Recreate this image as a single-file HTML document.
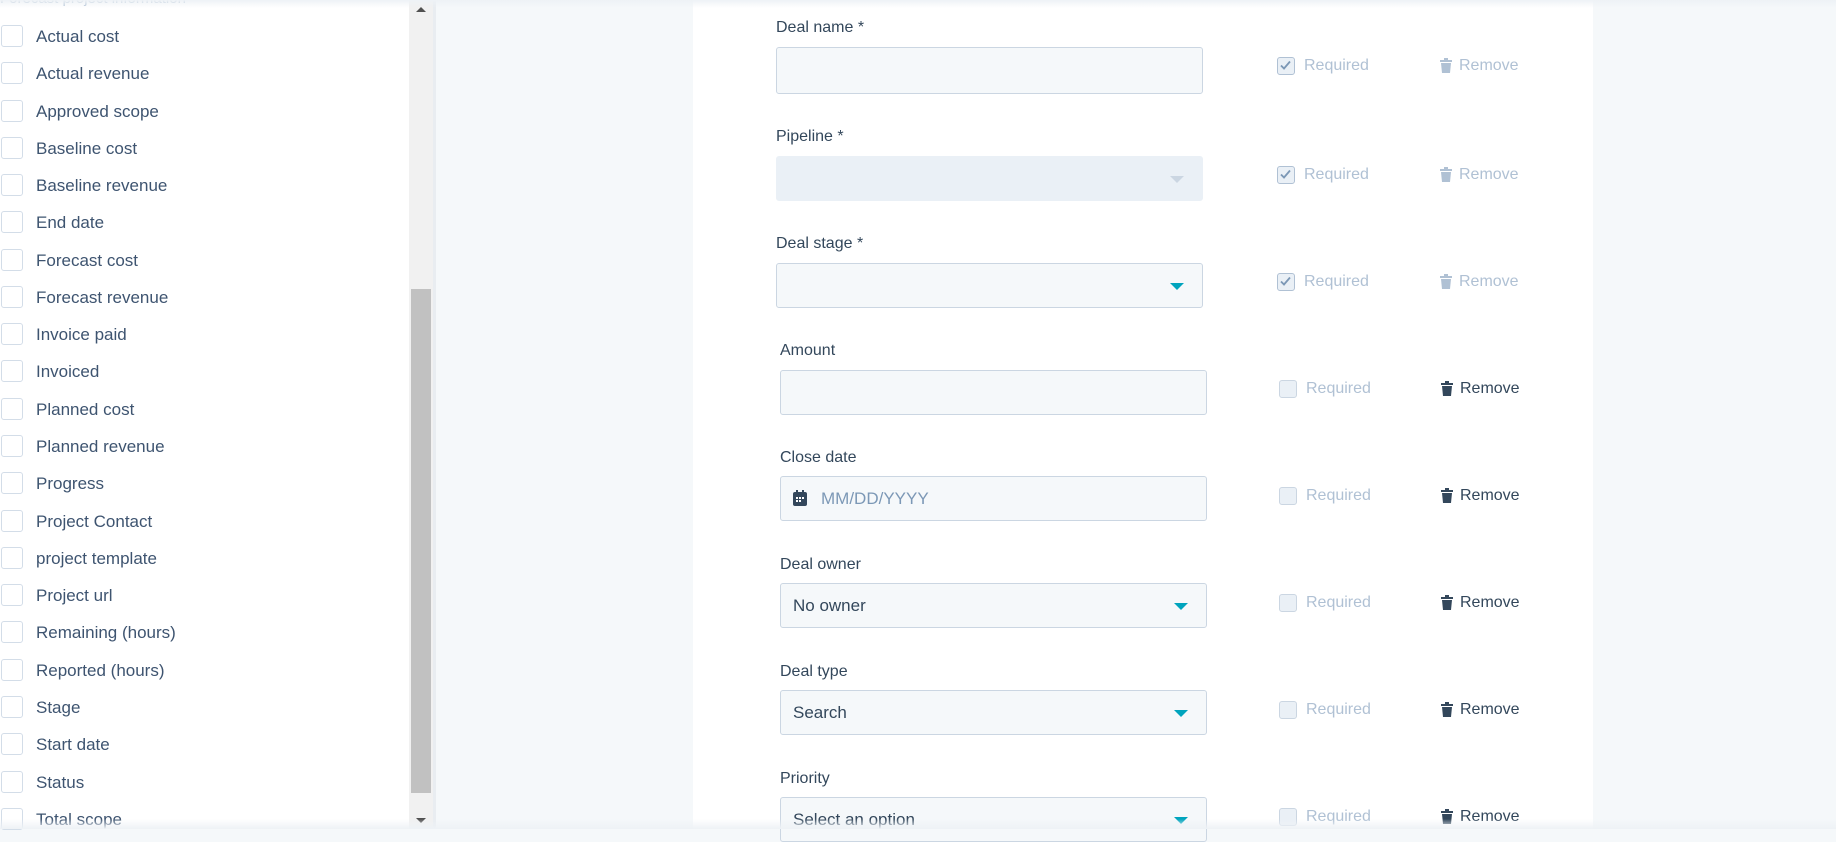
<!DOCTYPE html>
<html><head><meta charset="utf-8"><style>
*{box-sizing:border-box;margin:0;padding:0}
body{width:1836px;height:829px;overflow:hidden;background:#f5f8fa;font-family:"Liberation Sans",sans-serif;position:relative;color:#33475b}
.left{position:absolute;left:0;top:0;width:409px;height:829px;background:#fff}
.item{position:absolute;left:0;height:24px;font-size:17px;line-height:24px;color:#3e5470}
.item .cb{position:absolute;left:1px;top:0px;width:22px;height:22px;border:1.5px solid #d3dde8;border-radius:3px;background:#fff}
.item span{position:absolute;left:36px;top:0;white-space:nowrap}
.track{position:absolute;left:409px;top:0;width:24px;height:829px;background:#f1f1f1}
.thumb{position:absolute;left:411px;top:289px;width:20px;height:504px;background:#c1c1c1}
.border{position:absolute;left:433px;top:0;width:3px;height:829px;background:#e9edf1}
.card{position:absolute;left:693px;top:0;width:900px;height:829px;background:#fff}
.lbl{position:absolute;font-size:16px;color:#33475b;white-space:nowrap}
.inp{position:absolute;width:427px;background:#f5f8fa;border:1px solid #cbd6e2;border-radius:3px;font-size:17px;color:#33475b}
.inp .t{position:absolute;left:12px;top:50%;transform:translateY(-50%);white-space:nowrap}
.arr{position:absolute;right:18px;top:50%;margin-top:-3px;width:0;height:0;border-left:7px solid transparent;border-right:7px solid transparent;border-top:7px solid #00a4bd}
.req{position:absolute;left:1279px;font-size:16px;color:#b0c1d4;height:20px}
.req .b{position:absolute;left:0;top:0;width:18px;height:18px;border:1.5px solid #cbd6e2;border-radius:3px;background:#eaf0f6}
.req .b.on{border-color:#b0c1d4;background:#eaf0f6}
.req span{position:absolute;left:27px;top:0;line-height:18px}
.rem{position:absolute;left:1441px;font-size:16px;height:20px;line-height:18px;white-space:nowrap}
.rem svg{position:absolute;left:0;top:1px}
.rem span{position:absolute;left:19px;top:0}
.topsh{position:absolute;left:0;top:0;width:1836px;height:8px;background:linear-gradient(#eef2f6,rgba(255,255,255,0))}
.botsh{position:absolute;left:0;top:819px;width:1836px;height:10px;background:linear-gradient(rgba(245,248,250,0),#eef2f6)}
</style></head><body>
<div class="left">
<div style="position:absolute;left:0;top:-10px;font-size:15px;color:#b0c1d4">Forecast project information</div>
<div class="item" style="top:25px"><div class="cb"></div><span>Actual cost</span></div>
<div class="item" style="top:62px"><div class="cb"></div><span>Actual revenue</span></div>
<div class="item" style="top:100px"><div class="cb"></div><span>Approved scope</span></div>
<div class="item" style="top:137px"><div class="cb"></div><span>Baseline cost</span></div>
<div class="item" style="top:174px"><div class="cb"></div><span>Baseline revenue</span></div>
<div class="item" style="top:211px"><div class="cb"></div><span>End date</span></div>
<div class="item" style="top:249px"><div class="cb"></div><span>Forecast cost</span></div>
<div class="item" style="top:286px"><div class="cb"></div><span>Forecast revenue</span></div>
<div class="item" style="top:323px"><div class="cb"></div><span>Invoice paid</span></div>
<div class="item" style="top:360px"><div class="cb"></div><span>Invoiced</span></div>
<div class="item" style="top:398px"><div class="cb"></div><span>Planned cost</span></div>
<div class="item" style="top:435px"><div class="cb"></div><span>Planned revenue</span></div>
<div class="item" style="top:472px"><div class="cb"></div><span>Progress</span></div>
<div class="item" style="top:510px"><div class="cb"></div><span>Project Contact</span></div>
<div class="item" style="top:547px"><div class="cb"></div><span>project template</span></div>
<div class="item" style="top:584px"><div class="cb"></div><span>Project url</span></div>
<div class="item" style="top:621px"><div class="cb"></div><span>Remaining (hours)</span></div>
<div class="item" style="top:659px"><div class="cb"></div><span>Reported (hours)</span></div>
<div class="item" style="top:696px"><div class="cb"></div><span>Stage</span></div>
<div class="item" style="top:733px"><div class="cb"></div><span>Start date</span></div>
<div class="item" style="top:771px"><div class="cb"></div><span>Status</span></div>
<div class="item" style="top:808px"><div class="cb"></div><span>Total scope</span></div>
</div>
<div class="track"></div>
<div class="thumb"></div>
<div style="position:absolute;left:416px;top:7px;border-left:5px solid transparent;border-right:5px solid transparent;border-bottom:5px solid #505050"></div>
<div style="position:absolute;left:416px;top:818px;border-left:5px solid transparent;border-right:5px solid transparent;border-top:5px solid #505050"></div>
<div class="border"></div>
<div class="card"></div>

<div class="lbl" style="left:776px;top:19px">Deal name *</div>
<div class="inp" style="left:776px;top:47px;height:47px"></div>
<div class="lbl" style="left:776px;top:128px">Pipeline *</div>
<div class="inp" style="left:776px;top:156px;height:45px;background:#eaf0f6;border-color:#eaf0f6"><div class="arr" style="border-top-color:#cbd6e2"></div></div>
<div class="lbl" style="left:776px;top:235px">Deal stage *</div>
<div class="inp" style="left:776px;top:263px;height:45px"><div class="arr"></div></div>
<div class="lbl" style="left:780px;top:342px">Amount</div>
<div class="inp" style="left:780px;top:370px;height:45px"></div>
<div class="lbl" style="left:780px;top:449px">Close date</div>
<div class="inp" style="left:780px;top:476px;height:45px"><svg style="position:absolute;left:12px;top:13px" width="14" height="16" viewBox="0 0 14 16"><rect x="0" y="2" width="14" height="14" rx="2" fill="#33475b"/><rect x="3" y="0" width="2" height="4" fill="#33475b"/><rect x="9" y="0" width="2" height="4" fill="#33475b"/><g fill="#fff"><rect x="3" y="7" width="2" height="2"/><rect x="6" y="7" width="2" height="2"/><rect x="9" y="7" width="2" height="2"/><rect x="3" y="10" width="2" height="2"/><rect x="6" y="10" width="2" height="2"/></g></svg><span class="t" style="left:40px;color:#7c98b6">MM/DD/YYYY</span></div>
<div class="lbl" style="left:780px;top:556px">Deal owner</div>
<div class="inp" style="left:780px;top:583px;height:45px"><span class="t">No owner</span><div class="arr"></div></div>
<div class="lbl" style="left:780px;top:663px">Deal type</div>
<div class="inp" style="left:780px;top:690px;height:45px"><span class="t">Search</span><div class="arr"></div></div>
<div class="lbl" style="left:780px;top:770px">Priority</div>
<div class="inp" style="left:780px;top:797px;height:45px"><span class="t">Select an option</span><div class="arr"></div></div>

<div class="req" style="top:57px;left:1277px"><div class="b on"><svg width="15" height="15" viewBox="0 0 15 15" style="position:absolute;left:0;top:0"><path d="M3 7.5l3 3 6-7" stroke="#7c98b6" stroke-width="1.8" fill="none"/></svg></div><span>Required</span></div>
<div class="rem" style="top:57px;color:#b0c1d4;left:1440px"><svg width="12" height="15" viewBox="0 0 12 15"><rect x="4" y="0" width="4" height="2" fill="#b0c1d4"/><rect x="0" y="2" width="12" height="2" fill="#b0c1d4"/><path d="M1 5h10l-1 10H2z" fill="#b0c1d4"/></svg><span>Remove</span></div>
<div class="req" style="top:166px;left:1277px"><div class="b on"><svg width="15" height="15" viewBox="0 0 15 15" style="position:absolute;left:0;top:0"><path d="M3 7.5l3 3 6-7" stroke="#7c98b6" stroke-width="1.8" fill="none"/></svg></div><span>Required</span></div>
<div class="rem" style="top:166px;color:#b0c1d4;left:1440px"><svg width="12" height="15" viewBox="0 0 12 15"><rect x="4" y="0" width="4" height="2" fill="#b0c1d4"/><rect x="0" y="2" width="12" height="2" fill="#b0c1d4"/><path d="M1 5h10l-1 10H2z" fill="#b0c1d4"/></svg><span>Remove</span></div>
<div class="req" style="top:273px;left:1277px"><div class="b on"><svg width="15" height="15" viewBox="0 0 15 15" style="position:absolute;left:0;top:0"><path d="M3 7.5l3 3 6-7" stroke="#7c98b6" stroke-width="1.8" fill="none"/></svg></div><span>Required</span></div>
<div class="rem" style="top:273px;color:#b0c1d4;left:1440px"><svg width="12" height="15" viewBox="0 0 12 15"><rect x="4" y="0" width="4" height="2" fill="#b0c1d4"/><rect x="0" y="2" width="12" height="2" fill="#b0c1d4"/><path d="M1 5h10l-1 10H2z" fill="#b0c1d4"/></svg><span>Remove</span></div>

<div class="req" style="top:380px"><div class="b"></div><span>Required</span></div>
<div class="rem" style="top:380px;color:#33475b"><svg width="12" height="15" viewBox="0 0 12 15"><rect x="4" y="0" width="4" height="2" fill="#33475b"/><rect x="0" y="2" width="12" height="2" fill="#33475b"/><path d="M1 5h10l-1 10H2z" fill="#33475b"/></svg><span>Remove</span></div>
<div class="req" style="top:487px"><div class="b"></div><span>Required</span></div>
<div class="rem" style="top:487px;color:#33475b"><svg width="12" height="15" viewBox="0 0 12 15"><rect x="4" y="0" width="4" height="2" fill="#33475b"/><rect x="0" y="2" width="12" height="2" fill="#33475b"/><path d="M1 5h10l-1 10H2z" fill="#33475b"/></svg><span>Remove</span></div>
<div class="req" style="top:594px"><div class="b"></div><span>Required</span></div>
<div class="rem" style="top:594px;color:#33475b"><svg width="12" height="15" viewBox="0 0 12 15"><rect x="4" y="0" width="4" height="2" fill="#33475b"/><rect x="0" y="2" width="12" height="2" fill="#33475b"/><path d="M1 5h10l-1 10H2z" fill="#33475b"/></svg><span>Remove</span></div>
<div class="req" style="top:701px"><div class="b"></div><span>Required</span></div>
<div class="rem" style="top:701px;color:#33475b"><svg width="12" height="15" viewBox="0 0 12 15"><rect x="4" y="0" width="4" height="2" fill="#33475b"/><rect x="0" y="2" width="12" height="2" fill="#33475b"/><path d="M1 5h10l-1 10H2z" fill="#33475b"/></svg><span>Remove</span></div>
<div class="req" style="top:808px"><div class="b"></div><span>Required</span></div>
<div class="rem" style="top:808px;color:#33475b"><svg width="12" height="15" viewBox="0 0 12 15"><rect x="4" y="0" width="4" height="2" fill="#33475b"/><rect x="0" y="2" width="12" height="2" fill="#33475b"/><path d="M1 5h10l-1 10H2z" fill="#33475b"/></svg><span>Remove</span></div>

<div class="topsh"></div>
<div class="botsh"></div>
</body></html>
